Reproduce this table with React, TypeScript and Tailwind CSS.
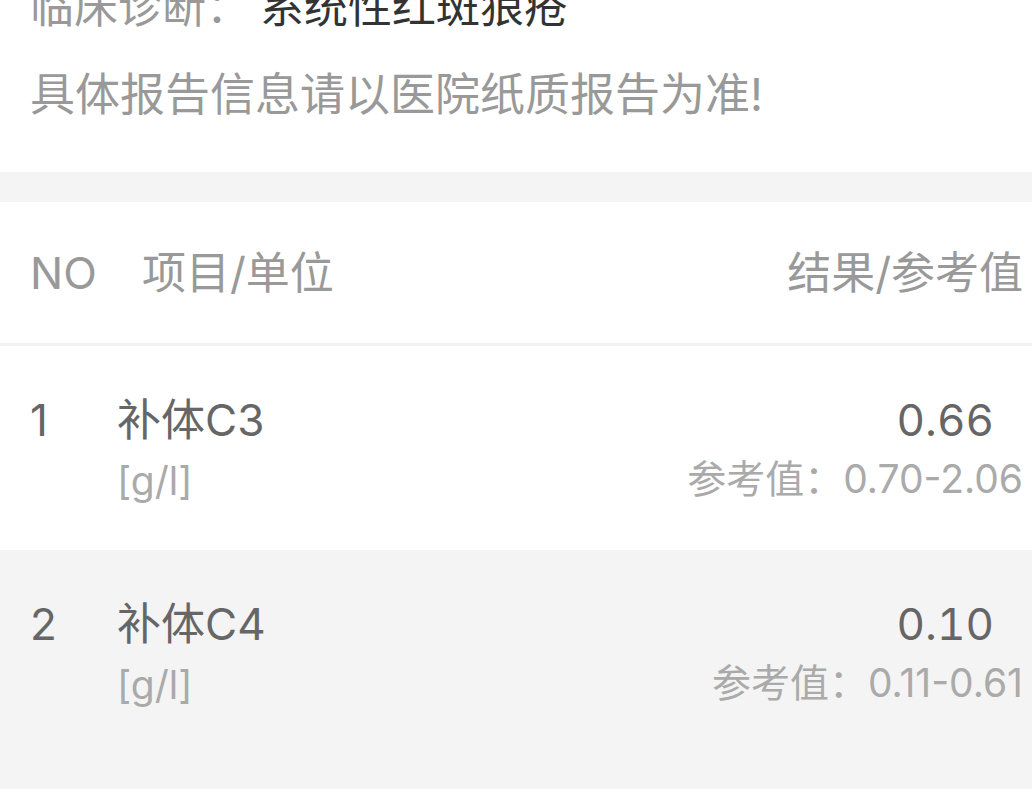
import React from 'react';

interface ReportItem {
  no: number;
  name: string;
  unit: string;
  value: string;
  range: string;
}

const ITEMS: ReportItem[] = [
  { no: 1, name: '补体C3', unit: '[g/l]', value: '0.66', range: '0.70-2.06' },
  { no: 2, name: '补体C4', unit: '[g/l]', value: '0.10', range: '0.11-0.61' },
];

export default function App() {
  return (
    <div className="min-h-screen bg-[#f4f4f4] font-['Inter','Noto_Sans_CJK_SC',sans-serif]">
      {/* Diagnosis + note */}
      <div className="bg-white pl-[30px] pr-[10px] pb-[47px]">
        <div className="-mt-[23px] flex h-[60px] items-center text-[44px] leading-[60px]">
          <span className="text-[#999999]">临床诊断：</span>
          <span className="ml-[10px] text-[#333333]">系统性红斑狼疮</span>
        </div>
        <div className="mt-[28px] h-[60px] text-[45px] leading-[60px] text-[#999999]">
          具体报告信息请以医院纸质报告为准!
        </div>
      </div>

      <div className="h-[30px] bg-[#f4f4f4]" />

      {/* Table header */}
      <div className="flex h-[144px] items-center border-b-[3px] border-[#f2f2f2] bg-white pl-[30px] pr-[9px] pt-[1px] text-[44px] text-[#999999]">
        <span className="w-[112px]">NO</span>
        <span>项目/单位</span>
        <span className="ml-auto">结果/参考值</span>
      </div>

      {/* Rows */}
      {ITEMS.map((item, i) => (
        <div
          key={item.no}
          className={`flex pl-[30px] pr-[9px] pt-[44px] pb-[41px] ${i % 2 === 0 ? 'bg-white' : 'bg-[#f4f4f4]'}`}
        >
          <div className="w-[87px] text-[44px] leading-[60px] text-[#666666]">{item.no}</div>
          <div className="flex flex-col">
            <span className="text-[44px] leading-[60px] text-[#666666]">{item.name}</span>
            <span className="mt-[3px] text-[39px] leading-[56px] text-[#aaaaaa]">{item.unit}</span>
          </div>
          <div className="ml-auto flex flex-col items-end">
            <span className="mr-[29px] text-[44px] leading-[60px] tabular-nums text-[#666666]">{item.value}</span>
            <span className="mt-[1px] text-[39px] leading-[56px] text-[#aaaaaa]">参考值：{item.range}</span>
          </div>
        </div>
      ))}
    </div>
  );
}
